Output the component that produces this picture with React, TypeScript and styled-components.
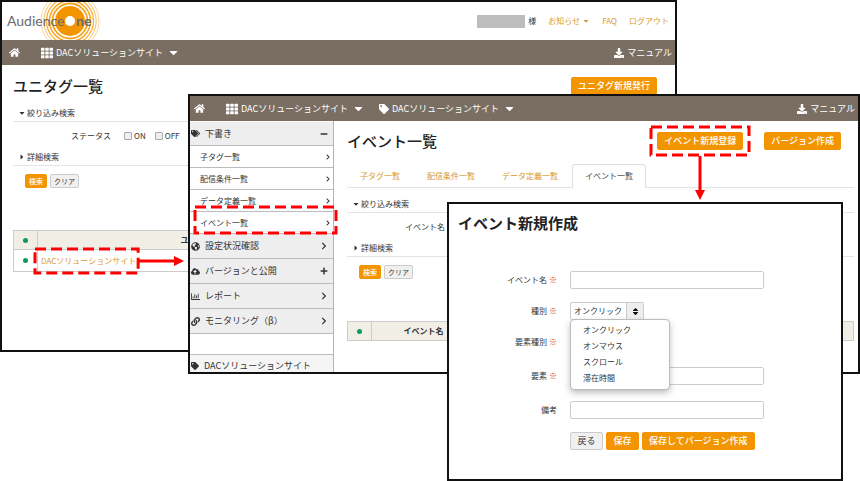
import React from "react";
import styled, { createGlobalStyle, css } from "styled-components";
import {
  FaHome,
  FaTh,
  FaCaretDown,
  FaCaretRight,
  FaDownload,
  FaTags,
  FaTag,
  FaGlobeAmericas,
  FaCloudUploadAlt,
  FaRegChartBar,
  FaLink,
  FaChevronRight,
  FaPlus,
  FaMinus,
  FaSort,
} from "react-icons/fa";

const color = {
  orange: "#f39500",
  link: "#d99a2b",
  bar: "#796e61",
  ink: "#333",
  line: "#e4e4e4",
  red: "#fe0000",
};

const GlobalStyle = createGlobalStyle`
  * { box-sizing: border-box; }
  body {
    margin: 0;
    background: #fff;
    color: ${color.ink};
    font: 8px/12px "Noto Sans CJK JP", "Noto Sans", sans-serif;
  }
  button, input, select { font: inherit; color: inherit; margin: 0; }
  h1, h2, ul { margin: 0; padding: 0; }
  ul { list-style: none; }
  a { color: ${color.link}; text-decoration: none; }
  svg { flex: none; }
`;

const Desktop = styled.main`
  display: grid;
  align-items: start;
`;

const Pane = styled.section`
  grid-area: 1 / 1;
  background: #fff;
  border: 2px solid #111;
`;
const TagPane = styled(Pane)`
  margin-right: 183px;
  padding-bottom: 78px;
`;
const EventPane = styled(Pane)`
  position: relative;
  margin: 94px 0 0 188px;
`;
const FormPane = styled(Pane)`
  position: relative;
  margin: 202px 17px 0 447px;
  padding: 10px 10px 29px 9px;
`;

const SiteHeader = styled.header`
  display: flex;
  align-items: center;
  justify-content: space-between;
  height: 38px;
  padding: 0 6px 0 4px;
`;
const Account = styled.div`
  display: flex;
  align-items: center;
`;
const UserName = styled.span`
  width: 48px;
  height: 13px;
  margin-right: 3px;
  background: #bdbdbd;
`;
const AccountLink = styled.a`
  display: flex;
  align-items: center;
  gap: 2px;
  margin-left: 12px;
`;

const NavBar = styled.nav<{ $start: number }>`
  display: flex;
  align-items: center;
  height: 25px;
  padding: 0 3px 0 ${(p) => p.$start}px;
  background: ${color.bar};
  font-size: 9px;
  a { color: #fff; }
`;
const NavLink = styled.a<{ $gap?: number }>`
  display: flex;
  align-items: center;
  gap: 3px;
  margin-left: ${(p) => p.$gap ?? 0}px;
`;
const NavCaret = styled(FaCaretDown)`
  margin-left: 1px;
`;
const NavEnd = styled.div`
  margin-left: auto;
`;

const PaneBody = styled.div`
  padding: 12px 18px 0 11px;
`;
const Title = styled.h1`
  font-size: 15px;
  line-height: 18px;
  font-weight: 500;
  color: #222;
`;
const FormTitle = styled(Title)`
  font-weight: 700;
  margin-bottom: 39px;
`;
const TitleRow = styled.div`
  display: flex;
  align-items: center;
  justify-content: space-between;
  height: 18px;
`;

const Button = styled.button<{ $kind?: "plain"; $small?: boolean }>`
  height: ${(p) => (p.$small ? 14 : 18)}px;
  min-width: ${(p) => (p.$small ? 22 : 33)}px;
  padding: 0 ${(p) => (p.$small ? 3 : 6)}px;
  border: 1px solid ${(p) => (p.$kind ? "#ccc" : color.orange)};
  border-radius: 2px;
  background: ${(p) => (p.$kind ? "#f0f0f0" : color.orange)};
  color: ${(p) => (p.$kind ? color.ink : "#fff")};
  font-size: ${(p) => (p.$small ? 7 : 9)}px;
  line-height: 12px;
  font-weight: ${(p) => (p.$kind ? 400 : 500)};
  white-space: nowrap;
`;
const ButtonRow = styled.div`
  display: flex;
  gap: 3px;
`;

const FiltersTop = styled.div`
  margin-top: 11px;
`;
const FilterHead = styled.button`
  display: flex;
  align-items: center;
  gap: 1px;
  width: 100%;
  height: 16px;
  padding: 0 0 1px 5px;
  border: 0;
  border-bottom: 1px solid ${color.line};
  background: none;
`;
const FilterBody = styled.div`
  display: flex;
  align-items: center;
  height: 28px;
  padding-left: 58px;
`;
const FilterActions = styled(ButtonRow)`
  padding: 8px 0 0 12px;
  margin-bottom: 42px;
`;
const CheckLabel = styled.label<{ $gap: number }>`
  display: flex;
  align-items: center;
  gap: 2px;
  margin-left: ${(p) => p.$gap}px;
`;
const Check = styled.input`
  appearance: none;
  width: 8px;
  height: 8px;
  border: 1px solid #aaa;
  border-radius: 1px;
  background: #eee;
`;

const Table = styled.table`
  width: 100%;
  border-collapse: collapse;
  table-layout: fixed;
  th, td {
    height: 22px;
    padding: 0 3px;
    border: 1px solid #ccc;
    text-align: left;
  }
  th {
    height: 19px;
    background: #f1eee6;
    text-align: center;
    font-weight: 700;
  }
`;
const DotCol = styled.col`
  width: 24px;
`;
const NameCol = styled.col<{ $width: number }>`
  width: ${(p) => p.$width}px;
`;
const Dot = styled.span`
  display: block;
  width: 5px;
  height: 5px;
  margin: 0 auto;
  border-radius: 50%;
  background: #0a9a5a;
`;

const Marked = styled.div`
  position: relative;
  width: fit-content;
`;
const FrameBox = styled.div<{ $inset: string }>`
  position: absolute;
  inset: ${(p) => p.$inset};
  pointer-events: none;
  z-index: 1;
  svg {
    display: block;
    width: 100%;
    height: 100%;
    overflow: visible;
  }
`;
const arrow = css`
  position: absolute;
  pointer-events: none;
  z-index: 1;
`;
const RightArrow = styled.svg`
  ${arrow}
  left: 100%;
  top: 0;
`;
const DownArrow = styled.svg`
  ${arrow}
  left: calc(50% - 6px);
  top: calc(100% + 6px);
`;

const Columns = styled.div`
  display: grid;
  grid-template-columns: 144px minmax(0, 1fr);
`;
const SideNav = styled.aside`
  padding-top: 1px;
  border-right: 1px solid #e0b04c;
`;
const SideLink = styled.a<{ $sub?: boolean }>`
  display: flex;
  align-items: center;
  gap: 5px;
  height: ${(p) => (p.$sub ? 22 : 25)}px;
  padding: 0 ${(p) => (p.$sub ? 2 : 5)}px 0 ${(p) => (p.$sub ? 10 : 1)}px;
  border-bottom: 1px solid #bbb;
  background: ${(p) => (p.$sub ? "#fff" : "#eee")};
  color: ${color.ink};
  font-size: ${(p) => (p.$sub ? 8 : 9)}px;
`;
const SideHead = styled(SideLink)`
  height: 24px;
`;
const SideText = styled.span`
  flex: 1;
`;
const SideItem = styled.li`
  position: relative;
`;
const SideFoot = styled(SideLink)`
  height: 18px;
  margin-top: 20px;
  padding-top: 5px;
  border: 0;
  border-top: 1px solid #bbb;
  background: #f5f5f5;
`;

const EventBody = styled.div`
  padding: 11px 4px 0 13px;
`;
const EventActions = styled.div`
  display: flex;
  gap: 21px;
  padding-right: 13px;
`;
const Tabs = styled.nav`
  display: flex;
  gap: 1px;
  margin: 14px 0 9px;
  border-bottom: 1px solid ${color.line};
`;
const Tab = styled.a<{ $active?: boolean }>`
  height: 24px;
  margin-bottom: -1px;
  padding: 5px 12px;
  border: 1px solid transparent;
  border-radius: 3px 3px 0 0;
  ${(p) =>
    p.$active &&
    css`
      border-color: #ddd #ddd #fff;
      background: #fff;
      color: #444;
    `}
`;

const Field = styled.div<{ $tall?: boolean }>`
  position: relative;
  display: grid;
  grid-template-columns: 99px minmax(0, 194px);
  align-items: center;
  gap: 13px;
  height: 18px;
  margin-bottom: ${(p) => (p.$tall ? 16 : 13)}px;
`;
const FieldLabel = styled.label`
  text-align: right;
`;
const Required = styled.span`
  margin-left: 2px;
  color: #d02a30;
  font-weight: 700;
`;
const TextInput = styled.input`
  width: 100%;
  height: 18px;
  padding: 0 4px;
  border: 1px solid #ccc;
  border-radius: 2px;
  background: #fff;
`;
const SelectBox = styled.div`
  position: relative;
  display: flex;
  width: 74px;
  height: 18px;
  border: 1px solid #ccc;
  border-radius: 2px;
  background: #fff;
`;
const Select = styled.select`
  appearance: none;
  flex: 1;
  min-width: 0;
  padding: 0 3px;
  border: 0;
  background: none;
`;
const SelectEnd = styled.span`
  display: flex;
  align-items: center;
  justify-content: center;
  width: 17px;
  border-left: 1px solid #ccc;
  background: #eee;
  color: #111;
`;
const Menu = styled.ul`
  position: absolute;
  top: 100%;
  left: -1px;
  z-index: 2;
  width: 100px;
  padding: 2px 0 3px;
  border: 1px solid #bbb;
  border-radius: 4px;
  background: #fff;
  box-shadow: 0 3px 6px rgba(0, 0, 0, 0.25);
`;
const MenuItem = styled.li`
  padding: 2px 12px;
`;
const FormActions = styled(ButtonRow)`
  padding-left: 112px;
`;

function Logo() {
  return (
    <svg width="98" height="38" viewBox="0 0 98 38" role="img" aria-label="AudienceOne">
      <g fill="none" stroke="#f5a623">
        <circle cx="64" cy="19" r="17.5" strokeWidth="1.8" />
        <circle cx="64" cy="19" r="20.5" strokeWidth="1.5" />
        <circle cx="64" cy="19" r="23.5" strokeWidth="1.3" stroke="#f6ae38" />
        <circle cx="64" cy="19" r="26.2" strokeWidth="1" stroke="#f8c062" />
        <circle cx="64" cy="19" r="29" strokeWidth="0.9" stroke="#fad08c" />
      </g>
      <circle cx="64" cy="19" r="15" fill="#f39500" />
      <text x="1" y="24" fontFamily="Lato, sans-serif" fontSize="14" fill="#6b6b6b">
        Audience
      </text>
      <circle cx="64" cy="19" r="5" fill="#fff" />
      <text x="70" y="24" fontFamily="Lato, sans-serif" fontSize="14" fontWeight="700" fill="#6b6b6b">
        ne
      </text>
    </svg>
  );
}

function Frame({ inset }: { inset: string }) {
  return (
    <FrameBox $inset={inset} aria-hidden="true">
      <svg>
        <rect width="100%" height="100%" fill="none" stroke={color.red} strokeWidth="3" strokeDasharray="11 5" />
      </svg>
    </FrameBox>
  );
}

function Manual() {
  return (
    <NavEnd>
      <NavLink href="#manual">
        <FaDownload size={10} />
        マニュアル
      </NavLink>
    </NavEnd>
  );
}

function Filters({ children }: { children: React.ReactNode }) {
  return (
    <>
      <FilterHead type="button">
        <FaCaretDown size={8} />
        絞り込み検索
      </FilterHead>
      <FilterBody>{children}</FilterBody>
      <FilterHead type="button">
        <FaCaretRight size={8} />
        詳細検索
      </FilterHead>
      <FilterActions>
        <Button type="button" $small>検索</Button>
        <Button type="button" $small $kind="plain">クリア</Button>
      </FilterActions>
    </>
  );
}

function TagList() {
  return (
    <TagPane>
      <SiteHeader>
        <Logo />
        <Account>
          <UserName />
          様
          <AccountLink href="#news">
            お知らせ
            <FaCaretDown size={8} />
          </AccountLink>
          <AccountLink href="#faq">FAQ</AccountLink>
          <AccountLink href="#logout">ログアウト</AccountLink>
        </Account>
      </SiteHeader>
      <NavBar $start={7}>
        <NavLink href="#home" aria-label="ホーム"><FaHome size={11} /></NavLink>
        <NavLink href="#site" $gap={21}>
          <FaTh size={12} />
          DACソリューションサイト
          <NavCaret size={13} />
        </NavLink>
        <Manual />
      </NavBar>
      <PaneBody>
        <TitleRow>
          <Title>ユニタグ一覧</Title>
          <Button type="button">ユニタグ新規発行</Button>
        </TitleRow>
        <FiltersTop>
          <Filters>
            <span>ステータス</span>
            <CheckLabel $gap={13}><Check type="checkbox" />ON</CheckLabel>
            <CheckLabel $gap={9}><Check type="checkbox" />OFF</CheckLabel>
          </Filters>
        </FiltersTop>
        <Table>
          <colgroup><DotCol /><NameCol $width={294} /><col /></colgroup>
          <thead>
            <tr><th><Dot /></th><th>ユ</th><th /></tr>
          </thead>
          <tbody>
            <tr>
              <td><Dot /></td>
              <td>
                <Marked>
                  <a href="#tag">DACソリューションサイト</a>
                  <Frame inset="-6px -2px -6px -6px" />
                  <RightArrow width="49" height="12" aria-hidden="true">
                    <path d="M3 6H40" stroke={color.red} strokeWidth="3" />
                    <path d="M38 1L48 6L38 11Z" fill={color.red} />
                  </RightArrow>
                </Marked>
              </td>
              <td />
            </tr>
          </tbody>
        </Table>
      </PaneBody>
    </TagPane>
  );
}

const subPages = ["子タグ一覧", "配信条件一覧", "データ定義一覧", "イベント一覧"];
const sections = [
  { text: "設定状況確認", Icon: FaGlobeAmericas, End: FaChevronRight },
  { text: "バージョンと公開", Icon: FaCloudUploadAlt, End: FaPlus },
  { text: "レポート", Icon: FaRegChartBar, End: FaChevronRight },
  { text: "モニタリング（β）", Icon: FaLink, End: FaChevronRight },
];

function EventList() {
  return (
    <EventPane>
      <NavBar $start={4}>
        <NavLink href="#home" aria-label="ホーム"><FaHome size={11} /></NavLink>
        <NavLink href="#site" $gap={21}>
          <FaTh size={12} />
          DACソリューションサイト
          <NavCaret size={13} />
        </NavLink>
        <NavLink href="#tag" $gap={14}>
          <FaTag size={10} />
          DACソリューションサイト
          <NavCaret size={13} />
        </NavLink>
        <Manual />
      </NavBar>
      <Columns>
        <SideNav>
          <ul>
            <SideItem>
              <SideHead href="#draft">
                <FaTags size={9} />
                <SideText>下書き</SideText>
                <FaMinus size={8} />
              </SideHead>
            </SideItem>
            {subPages.map((text, i) => (
              <SideItem key={text}>
                <SideLink href="#page" $sub>
                  <SideText>{text}</SideText>
                  <FaChevronRight size={6} />
                </SideLink>
                {i === 3 && <Frame inset="-5px -3px 1px 5px" />}
              </SideItem>
            ))}
            {sections.map(({ text, Icon, End }) => (
              <SideItem key={text}>
                <SideLink href="#section">
                  <Icon size={9} />
                  <SideText>{text}</SideText>
                  <End size={8} />
                </SideLink>
              </SideItem>
            ))}
          </ul>
          <SideFoot href="#tag">
            <FaTag size={8} />
            DACソリューションサイト
          </SideFoot>
        </SideNav>
        <EventBody>
          <TitleRow>
            <Title>イベント一覧</Title>
            <EventActions>
              <Marked>
                <Button type="button">イベント新規登録</Button>
                <Frame inset="-5px -6px" />
                <DownArrow width="12" height="44" aria-hidden="true">
                  <path d="M6 0V36" stroke={color.red} strokeWidth="3" />
                  <path d="M1 34H11L6 44Z" fill={color.red} />
                </DownArrow>
              </Marked>
              <Button type="button">バージョン作成</Button>
            </EventActions>
          </TitleRow>
          <Tabs>
            {subPages.map((text, i) => (
              <Tab href="#tab" key={text} $active={i === 3}>{text}</Tab>
            ))}
          </Tabs>
          <Filters>イベント名</Filters>
          <Table>
            <colgroup><DotCol /><NameCol $width={104} /><col /></colgroup>
            <thead>
              <tr><th><Dot /></th><th>イベント名</th><th /></tr>
            </thead>
          </Table>
        </EventBody>
      </Columns>
    </EventPane>
  );
}

const kinds = ["オンクリック", "オンマウス", "スクロール", "滞在時間"];

function EventForm() {
  return (
    <FormPane>
      <FormTitle as="h2">イベント新規作成</FormTitle>
      <form>
        <Field>
          <FieldLabel htmlFor="name">イベント名<Required>※</Required></FieldLabel>
          <TextInput id="name" />
        </Field>
        <Field>
          <FieldLabel htmlFor="kind">種別<Required>※</Required></FieldLabel>
          <SelectBox>
            <Select id="kind" defaultValue={kinds[0]}>
              {kinds.map((k) => <option key={k}>{k}</option>)}
            </Select>
            <SelectEnd><FaSort size={9} /></SelectEnd>
            <Menu>
              {kinds.map((k) => <MenuItem key={k}>{k}</MenuItem>)}
            </Menu>
          </SelectBox>
        </Field>
        <Field $tall>
          <FieldLabel htmlFor="element-kind">要素種別<Required>※</Required></FieldLabel>
          <SelectBox>
            <Select id="element-kind" />
            <SelectEnd><FaSort size={9} /></SelectEnd>
          </SelectBox>
        </Field>
        <Field $tall>
          <FieldLabel htmlFor="element">要素<Required>※</Required></FieldLabel>
          <TextInput id="element" />
        </Field>
        <Field>
          <FieldLabel htmlFor="note">備考</FieldLabel>
          <TextInput id="note" />
        </Field>
        <FormActions>
          <Button type="button" $kind="plain">戻る</Button>
          <Button type="button">保存</Button>
          <Button type="button">保存してバージョン作成</Button>
        </FormActions>
      </form>
    </FormPane>
  );
}

export default function App() {
  return (
    <>
      <GlobalStyle />
      <Desktop>
        <TagList />
        <EventList />
        <EventForm />
      </Desktop>
    </>
  );
}
